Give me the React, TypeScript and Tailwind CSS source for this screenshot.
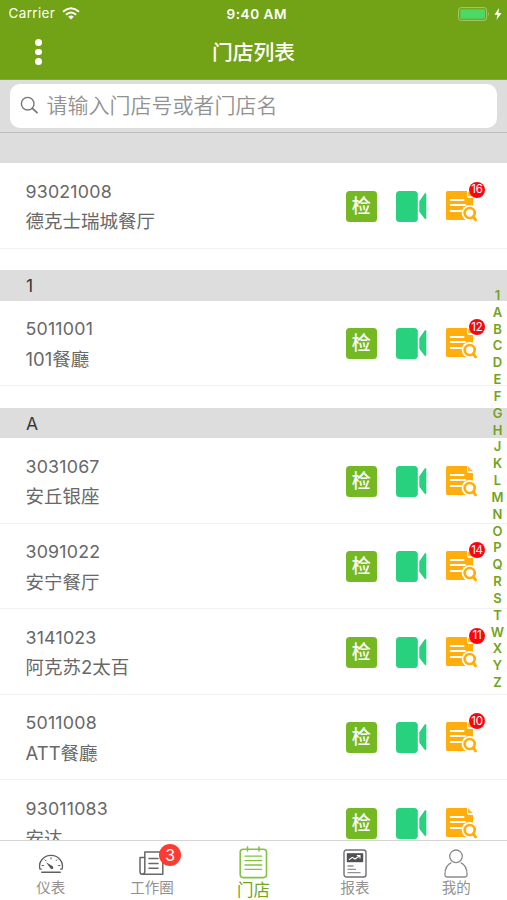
import React from "react";

type Store = { code: string; name: string; badge?: string };
type Section = { title: string; stores: Store[] };

const SECTIONS: Section[] = [
  { title: "", stores: [{ code: "93021008", name: "德克士瑞城餐厅", badge: "16" }] },
  { title: "1", stores: [{ code: "5011001", name: "101餐廳", badge: "12" }] },
  {
    title: "A",
    stores: [
      { code: "3031067", name: "安丘银座" },
      { code: "3091022", name: "安宁餐厅", badge: "14" },
      { code: "3141023", name: "阿克苏2太百", badge: "11" },
      { code: "5011008", name: "ATT餐廳", badge: "10" },
      { code: "93011083", name: "安达" },
    ],
  },
];

const INDEX = "1ABCDEFGHJKLMNOPQRSTWXYZ".split("");

function VideoIcon() {
  return (
    <svg width="32" height="31" viewBox="0 0 32 31" fill="#27d17d">
      <rect x="0" y="0" width="21.8" height="31" rx="3.5" />
      <path d="M23.3 10.3 28.3 3Q30.3 1 30.3 3.3V27Q30.3 29.2 28.3 27.3L23.3 20.7Z" />
    </svg>
  );
}

function ReportSearchIcon() {
  return (
    <svg width="32" height="32" viewBox="0 0 32 32">
      <path d="M1.5 0H21V5Q21 7 23 7H27V29H1.5Q0 29 0 27.5V1.5Q0 0 1.5 0Z" fill="#ffae0d" />
      <path d="M22 0.3 26.8 5.3H23Q22 5.3 22 4.3Z" fill="#ffb930" />
      <path d="M4.8 9H17.5M4.8 14H19M4.8 20H15" stroke="#fff" strokeWidth="2" strokeLinecap="round" />
      <circle cx="23.7" cy="22" r="8" fill="#fff" />
      <path d="M21 24.5 30 31.5" stroke="#fff" strokeWidth="5.5" />
      <circle cx="23.7" cy="22" r="5" fill="#fff" stroke="#ffae0d" strokeWidth="2.7" />
      <path d="M27.2 25.7 29.5 28.8" stroke="#ffae0d" strokeWidth="3" strokeLinecap="round" />
    </svg>
  );
}

function StoreRow({ store }: { store: Store }) {
  return (
    <div className="flex h-[85.5px] shrink-0 border-b-[1.5px] border-[#f1f1f1] bg-white pl-[25.5px] pt-[12.6px]">
      <div className="w-[320.2px] text-[18.5px] text-[#686868]">
        <div className="h-[30.5px] text-[17.8px] leading-[31px] tracking-[0.2px]">{store.code}</div>
        <div className="h-[30.5px] leading-[30.5px]">{store.name}</div>
      </div>
      <div className="flex pt-[15px]">
        <div className="flex h-[31px] w-[31px] items-center justify-center rounded-[3.5px] bg-[#74b824] text-[19px] font-medium leading-none text-white">
          <span>检</span>
        </div>
        <div className="ml-[19.3px]">
          <VideoIcon />
        </div>
        <div className="relative ml-[18px]">
          <ReportSearchIcon />
          {store.badge && (
            <span className="absolute -top-[9px] left-[23px] flex h-4 w-4 items-center justify-center rounded-full bg-[#fb0510] pt-px text-[11.5px] leading-none tracking-[-0.2px] text-white">
              {store.badge}
            </span>
          )}
        </div>
      </div>
    </div>
  );
}

function GaugeIcon() {
  return (
    <svg width="26" height="20" viewBox="0 0 26 20" fill="none" stroke="#606060" strokeWidth="1.3" strokeLinecap="round">
      <path d="M3.3 15.2H2Q0.5 10 3.6 6Q7 1.3 13 1.3T22.4 6Q25.5 10 24 15.2H22.7" />
      <path d="M3.8 18.2H22.2" strokeWidth="1.6" />
      <path d="M13 3.5V5M7 5.8 8 6.8M19 5.8 18 6.8M4 11.5H5.5M20.5 11.5H22" strokeWidth="1" />
      <path d="M8 8.2 14.8 12.3Q16 14.2 14.6 15Q13.2 15.5 12.2 14Z" fill="#555" stroke="none" />
    </svg>
  );
}

function NewsIcon() {
  return (
    <svg width="26" height="25" viewBox="0 0 26 25" fill="none" stroke="#686868" strokeWidth="1.5" strokeLinecap="round" strokeLinejoin="round">
      <path d="M5.8 1H23.8V23.3H3.2Q5.8 23.3 5.8 20.5Z" />
      <path d="M5.8 6.5H1V20.5Q1 23.3 3.2 23.3" />
      <path d="M10 7.5H19M10 12.5H19M10 17.3H19" />
    </svg>
  );
}

function NotepadIcon() {
  return (
    <svg width="29" height="33" viewBox="0 0 29 33" fill="none" stroke="#82c341" strokeLinecap="round">
      <rect x="1.2" y="3.3" width="26.3" height="28.3" rx="3" strokeWidth="1.6" />
      <path d="M8.5 1V5M20 1V5" strokeWidth="1.6" />
      <path d="M6 10.2H22.7M6 14.6H22.7M6 19H22.7M6 23.3H22.7" strokeWidth="1.3" />
    </svg>
  );
}

function ReportIcon() {
  return (
    <svg width="24" height="29" viewBox="0 0 24 29" fill="none" stroke="#707074" strokeWidth="1.4">
      <rect x="1" y="1" width="22" height="27" rx="2.5" />
      <rect x="3.8" y="4.2" width="16.4" height="9" fill="#505054" stroke="none" />
      <path d="M6 10.8 9.2 8.3 12 10 16.7 6.8M13.8 6.5H17V9.5" stroke="#fff" strokeWidth="1.1" />
      <path d="M4.5 17H10.5M4.5 20.3H13M4.5 23.7H17.5" stroke="#929296" strokeWidth="1.3" />
    </svg>
  );
}

function PersonIcon() {
  return (
    <svg width="24" height="29" viewBox="0 0 24 29" fill="none" stroke="#8c8c8c" strokeWidth="1.3">
      <circle cx="12" cy="7.3" r="6.3" />
      <path d="M7.3 13.7C3.5 15.5 1 20 .9 25.5Q.9 28 3.2 28H20.8Q23.1 28 23.1 25.5C23 20 20.5 15.5 16.7 13.7" />
    </svg>
  );
}

function Tab({ icon, label, active, badge }: { icon: React.ReactNode; label: string; active?: boolean; badge?: string }) {
  return (
    <div className="flex flex-1 flex-col items-center">
      <div className={active ? "relative flex h-[38px] items-end" : "relative flex h-[37px] items-end"}>
        {icon}
        {badge && (
          <span className="absolute left-[20px] top-[3px] flex h-[22px] w-[22px] items-center justify-center rounded-full bg-[#fd3b32] text-[16px] leading-none text-white">
            {badge}
          </span>
        )}
      </div>
      <div className={active ? "mt-[2px] text-[16.5px] leading-[18px] text-[#73a61a]" : "mt-px text-[14.5px] leading-[18px] text-[#929292]"}>
        {label}
      </div>
    </div>
  );
}

export default function App() {
  return (
    <div className="relative flex h-[900px] w-[507px] flex-col overflow-hidden bg-white font-['Inter','Noto_Sans_CJK_SC',sans-serif]">
      <header className="flex h-[79.5px] shrink-0 flex-col border-b border-[#8e9b76] bg-[#72a215] text-white">
        <div className="grid h-[27px] grid-cols-3 items-center pl-[8.5px] pr-[5px] text-[13.5px]">
          <div className="flex items-center gap-[7px] tracking-[0.35px]">
            <span>Carrier</span>
            <svg width="18" height="13" viewBox="0 0 18 13" fill="none" stroke="#fff" strokeWidth="2">
              <path d="M1 4.7Q9-2.2 17 4.7M3.9 7.7Q9 3.2 14.1 7.7" />
              <path d="M6.2 9.7Q9 7.4 11.8 9.7L9 12.6Z" fill="#fff" stroke="none" />
            </svg>
          </div>
          <div className="pl-[3px] pt-px text-center text-[13.6px] font-semibold tracking-[0.5px]">9:40 AM</div>
          <div className="flex items-center justify-end gap-[4px]">
            <svg width="32" height="14" viewBox="0 0 32 14" fill="none">
              <rect x="0.6" y="0.6" width="28" height="12.8" rx="2.5" stroke="#a9c86c" strokeWidth="1" />
              <rect x="2.3" y="2.3" width="24.6" height="9.4" rx="1" fill="#4bd964" />
              <path d="M30.2 4.7Q32 7 30.2 9.3Z" fill="#a9c86c" />
            </svg>
            <svg width="8" height="12" viewBox="0 0 8 12" fill="#fff">
              <path d="M5 0 0.5 6.7H3.5L2.5 12 7.5 4.9H4.5Z" />
            </svg>
          </div>
        </div>
        <div className="grid flex-1 grid-cols-3">
          <div className="flex flex-col gap-[3px] pl-[35px] pt-[12px]">
            <span className="h-[6.7px] w-[6.7px] rounded-full bg-white" />
            <span className="h-[6.7px] w-[6.7px] rounded-full bg-white" />
            <span className="h-[6.7px] w-[6.7px] rounded-full bg-white" />
          </div>
          <h1 className="pt-[11px] text-center text-[20.8px] font-medium leading-[30px]">门店列表</h1>
        </div>
      </header>

      <div className="h-[53px] shrink-0 border-b border-[#bdbdbd] bg-[#dddddd] px-[10px] pt-[4px]">
        <div className="flex h-[44px] items-center rounded-[10px] bg-white pl-[9.5px]">
          <svg width="19" height="19" viewBox="0 0 19 19" fill="none" stroke="#777" strokeWidth="1.4" strokeLinecap="round">
            <circle cx="7.7" cy="7.7" r="6.3" />
            <path d="M12.4 12.4 17 16.7" strokeWidth="1.8" />
          </svg>
          <span className="ml-[8px] pb-px text-[21px] font-[350] leading-none text-[#929292]">请输入门店号或者门店名</span>
        </div>
      </div>

      <main className="flex min-h-0 flex-1 flex-col overflow-hidden">
        {SECTIONS.map((section, i) => (
          <section key={section.title} className={i === 0 ? "shrink-0" : "mt-[21.5px] shrink-0"}>
            <div className="h-[30.5px] bg-[#dddddd] pl-[26px] text-[17.5px] leading-[31px] text-[#383838]">{section.title}</div>
            {section.stores.map((store) => (
              <StoreRow key={store.code} store={store} />
            ))}
          </section>
        ))}
      </main>

      <nav className="flex h-[60px] shrink-0 border-t border-[#d4d4d4] bg-white">
        <Tab icon={<div className="pb-[4px]"><GaugeIcon /></div>} label="仪表" />
        <Tab icon={<div className="pb-[2px]"><NewsIcon /></div>} label="工作圈" badge="3" />
        <Tab icon={<NotepadIcon />} label="门店" active />
        <Tab icon={<ReportIcon />} label="报表" />
        <Tab icon={<PersonIcon />} label="我的" />
      </nav>

      <div className="absolute right-0 top-[287px] flex w-[19px] flex-col items-center text-[13px] font-semibold text-[#73a31c]">
        {INDEX.map((c) => (
          <span key={c} className="h-[16.83px] leading-[16.83px]">{c}</span>
        ))}
      </div>
    </div>
  );
}
